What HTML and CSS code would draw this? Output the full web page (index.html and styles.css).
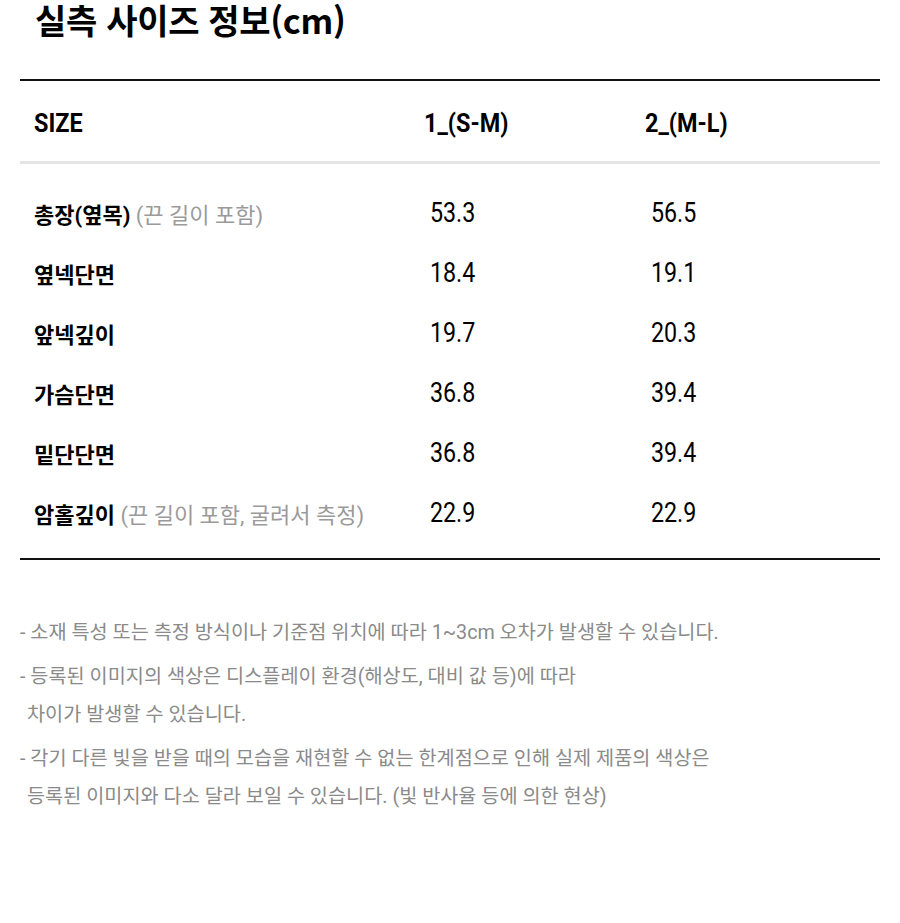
FILE: index.html
```html
<!DOCTYPE html>
<html lang="ko">
<head>
<meta charset="utf-8">
<link rel="stylesheet" href="styles.css">
</head>
<body>
<div class="page">
  <h1 class="title">실측 사이즈 정보(cm)</h1>
  <div class="table">
    <div class="row head">
      <div class="cell label"><span class="cond">SIZE</span></div>
      <div class="cell"><span class="cond">1_(S-M)</span></div>
      <div class="cell"><span class="cond">2_(M-L)</span></div>
    </div>
    <div class="body">
      <div class="row">
        <div class="cell label">총장(옆목) <span class="sub">(끈 길이 포함)</span></div>
        <div class="cell num"><span class="cond">53.3</span></div>
        <div class="cell num"><span class="cond">56.5</span></div>
      </div>
      <div class="row">
        <div class="cell label">옆넥단면</div>
        <div class="cell num"><span class="cond">18.4</span></div>
        <div class="cell num"><span class="cond">19.1</span></div>
      </div>
      <div class="row">
        <div class="cell label">앞넥깊이</div>
        <div class="cell num"><span class="cond">19.7</span></div>
        <div class="cell num"><span class="cond">20.3</span></div>
      </div>
      <div class="row">
        <div class="cell label">가슴단면</div>
        <div class="cell num"><span class="cond">36.8</span></div>
        <div class="cell num"><span class="cond">39.4</span></div>
      </div>
      <div class="row">
        <div class="cell label">밑단단면</div>
        <div class="cell num"><span class="cond">36.8</span></div>
        <div class="cell num"><span class="cond">39.4</span></div>
      </div>
      <div class="row">
        <div class="cell label">암홀깊이 <span class="sub">(끈 길이 포함, 굴려서 측정)</span></div>
        <div class="cell num"><span class="cond">22.9</span></div>
        <div class="cell num"><span class="cond">22.9</span></div>
      </div>
    </div>
  </div>
  <div class="notes">
    <p>- 소재 특성 또는 측정 방식이나 기준점 위치에 따라 1~3cm 오차가 발생할 수 있습니다.</p>
    <p>- 등록된 이미지의 색상은 디스플레이 환경(해상도, 대비 값 등)에 따라<br>차이가 발생할 수 있습니다.</p>
    <p>- 각기 다른 빛을 받을 때의 모습을 재현할 수 없는 한계점으로 인해 실제 제품의 색상은<br>등록된 이미지와 다소 달라 보일 수 있습니다. (빛 반사율 등에 의한 현상)</p>
  </div>
</div>
</body>
</html>
```
FILE: styles.css
```css
html, body {
  margin: 0;
  padding: 0;
  background: #fff;
}
.page {
  padding: 0 20px;
  font-family: Roboto, "Noto Sans CJK KR", sans-serif;
  color: #000;
}
.title {
  margin: 0 0 39px 15px;
  font-family: "Noto Sans CJK KR", sans-serif;
  font-size: 34px;
  line-height: 40px;
  font-weight: 700;
  letter-spacing: -0.3px;
}
.table {
  border-top: 2px solid #111;
  border-bottom: 2px solid #111;
}
.row {
  display: grid;
  grid-template-columns: 390px 221px 1fr;
  padding-left: 14px;
  align-items: center;
  height: 60px;
}
.row.head {
  height: 83px;
  padding-top: 3px;
  box-sizing: border-box;
  border-bottom: 3px solid #e5e5e5;
  font-size: 26px;
  font-weight: 700;
}
.cond {
  display: inline-block;
  transform: scaleX(0.9);
  transform-origin: left center;
  white-space: nowrap;
}
.body {
  padding: 19px 0 15px;
}
.label {
  font-size: 22px;
  font-weight: 700;
}
.head .label {
  font-size: 26px;
}
.sub {
  font-weight: 400;
  color: #9a9a9a;
}
.num {
  font-size: 27px;
  padding-left: 6px;
}
.num .cond {
  transform: scaleX(0.86);
}
.notes {
  margin-top: 54px;
  color: #8a8a8a;
  font-size: 19.7px;
}
.notes p {
  margin: 0 0 6px;
  line-height: 38px;
  padding-left: 7px;
  text-indent: -7px;
}
```
